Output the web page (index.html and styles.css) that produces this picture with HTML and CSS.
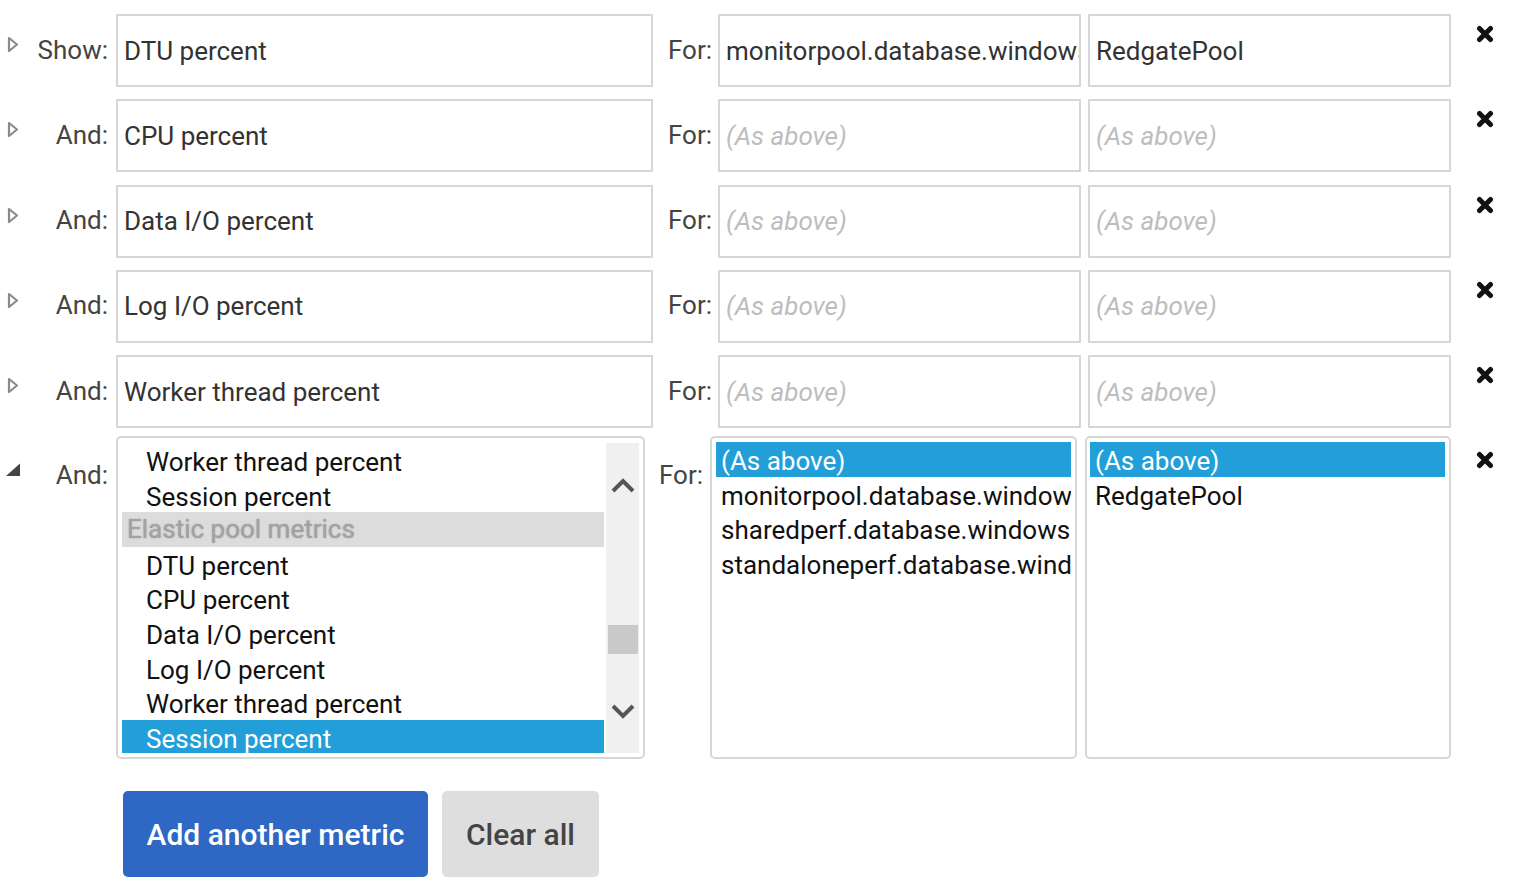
FILE: index.html
```html
<!DOCTYPE html>
<html lang="en">
<head>
    <meta charset="UTF-8">
    <meta name="viewport" content="width=device-width, initial-scale=1.0">
    <title>Metric picker</title>
    <link rel="stylesheet" href="styles.css">
</head>
<body>

    <main class="metrics">

        <div class="metric-row">
            <span class="toggle"><svg width="12" height="17" viewBox="0 0 12 17"><polygon points="2,2 10,8.5 2,15" fill="none" stroke="#8a8a8a" stroke-width="2.2" stroke-linejoin="round"/></svg></span>
            <label class="row-label">Show:</label>
            <input class="metric-input" type="text" value="DTU percent">
            <span class="for-label">For:</span>
            <input class="server-input" type="text" value="monitorpool.database.windows.net">
            <input class="pool-input" type="text" value="RedgatePool">
            <button class="remove"><svg width="18" height="18" viewBox="0 0 18 18"><path d="M3.5 3.5 L14.5 14.5 M14.5 3.5 L3.5 14.5" stroke="#111" stroke-width="5" stroke-linecap="round"/></svg></button>
        </div>

        <div class="metric-row">
            <span class="toggle"><svg width="12" height="17" viewBox="0 0 12 17"><polygon points="2,2 10,8.5 2,15" fill="none" stroke="#8a8a8a" stroke-width="2.2" stroke-linejoin="round"/></svg></span>
            <label class="row-label">And:</label>
            <input class="metric-input" type="text" value="CPU percent">
            <span class="for-label">For:</span>
            <input class="server-input" type="text" placeholder="(As above)">
            <input class="pool-input" type="text" placeholder="(As above)">
            <button class="remove"><svg width="18" height="18" viewBox="0 0 18 18"><path d="M3.5 3.5 L14.5 14.5 M14.5 3.5 L3.5 14.5" stroke="#111" stroke-width="5" stroke-linecap="round"/></svg></button>
        </div>

        <div class="metric-row">
            <span class="toggle"><svg width="12" height="17" viewBox="0 0 12 17"><polygon points="2,2 10,8.5 2,15" fill="none" stroke="#8a8a8a" stroke-width="2.2" stroke-linejoin="round"/></svg></span>
            <label class="row-label">And:</label>
            <input class="metric-input" type="text" value="Data I/O percent">
            <span class="for-label">For:</span>
            <input class="server-input" type="text" placeholder="(As above)">
            <input class="pool-input" type="text" placeholder="(As above)">
            <button class="remove"><svg width="18" height="18" viewBox="0 0 18 18"><path d="M3.5 3.5 L14.5 14.5 M14.5 3.5 L3.5 14.5" stroke="#111" stroke-width="5" stroke-linecap="round"/></svg></button>
        </div>

        <div class="metric-row">
            <span class="toggle"><svg width="12" height="17" viewBox="0 0 12 17"><polygon points="2,2 10,8.5 2,15" fill="none" stroke="#8a8a8a" stroke-width="2.2" stroke-linejoin="round"/></svg></span>
            <label class="row-label">And:</label>
            <input class="metric-input" type="text" value="Log I/O percent">
            <span class="for-label">For:</span>
            <input class="server-input" type="text" placeholder="(As above)">
            <input class="pool-input" type="text" placeholder="(As above)">
            <button class="remove"><svg width="18" height="18" viewBox="0 0 18 18"><path d="M3.5 3.5 L14.5 14.5 M14.5 3.5 L3.5 14.5" stroke="#111" stroke-width="5" stroke-linecap="round"/></svg></button>
        </div>

        <div class="metric-row">
            <span class="toggle"><svg width="12" height="17" viewBox="0 0 12 17"><polygon points="2,2 10,8.5 2,15" fill="none" stroke="#8a8a8a" stroke-width="2.2" stroke-linejoin="round"/></svg></span>
            <label class="row-label">And:</label>
            <input class="metric-input" type="text" value="Worker thread percent">
            <span class="for-label">For:</span>
            <input class="server-input" type="text" placeholder="(As above)">
            <input class="pool-input" type="text" placeholder="(As above)">
            <button class="remove"><svg width="18" height="18" viewBox="0 0 18 18"><path d="M3.5 3.5 L14.5 14.5 M14.5 3.5 L3.5 14.5" stroke="#111" stroke-width="5" stroke-linecap="round"/></svg></button>
        </div>

        <!-- row being edited: the pickers are open -->
        <div class="metric-row open">
            <span class="toggle"><svg width="16" height="14" viewBox="0 0 16 14"><polygon points="15,0.5 15,13 1,13" fill="#444"/></svg></span>
            <label class="row-label">And:</label>
            <div class="listbox metric-list">
                <div class="options">
                    <div class="option">Worker thread percent</div>
                    <div class="option">Session percent</div>
                    <div class="group">Elastic pool metrics</div>
                    <div class="option">DTU percent</div>
                    <div class="option">CPU percent</div>
                    <div class="option">Data I/O percent</div>
                    <div class="option">Log I/O percent</div>
                    <div class="option">Worker thread percent</div>
                    <div class="option selected">Session percent</div>
                </div>
                <div class="scrollbar">
                    <svg class="sb-up" width="26" height="18" viewBox="0 0 26 18"><path d="M3 15 L13 5 L23 15" fill="none" stroke="#555" stroke-width="4"/></svg>
                    <div class="sb-thumb"></div>
                    <svg class="sb-down" width="26" height="18" viewBox="0 0 26 18"><path d="M3 3 L13 13 L23 3" fill="none" stroke="#555" stroke-width="4"/></svg>
                </div>
            </div>
            <span class="for-label">For:</span>
            <div class="listbox server-list">
                <div class="options">
                    <div class="option selected">(As above)</div>
                    <div class="option">monitorpool.database.windows.net</div>
                    <div class="option">sharedperf.database.windows.net</div>
                    <div class="option">standaloneperf.database.windows.net</div>
                </div>
            </div>
            <div class="listbox pool-list">
                <div class="options">
                    <div class="option selected">(As above)</div>
                    <div class="option">RedgatePool</div>
                </div>
            </div>
            <button class="remove"><svg width="18" height="18" viewBox="0 0 18 18"><path d="M3.5 3.5 L14.5 14.5 M14.5 3.5 L3.5 14.5" stroke="#111" stroke-width="5" stroke-linecap="round"/></svg></button>
        </div>

        <div class="actions">
            <button class="btn btn-primary">Add another metric</button>
            <button class="btn">Clear all</button>
        </div>

    </main>

</body>
</html>
```

FILE: styles.css
```css
* {
    box-sizing: border-box;
}

body {
    margin: 0;
    background: #fff;
    font-family: Roboto, "Noto Sans", sans-serif;
    font-size: 26px;
    color: #333;
}

.metrics {
    padding-top: 14px;
}

.metric-row {
    display: flex;
    align-items: flex-start;
    margin-bottom: 12.25px;
}

.metric-row.open {
    margin-top: -4.25px;
    margin-bottom: 32px;
}

.toggle {
    width: 30px;
    height: 73px;
    padding: 22px 0 0 7px;
    flex-shrink: 0;
}

.open .toggle {
    padding: 27px 0 0 5px;
}

.toggle svg {
    display: block;
}

.row-label,
.for-label {
    display: flex;
    align-items: center;
    justify-content: flex-end;
    height: 71px;
    color: #444;
    flex-shrink: 0;
}

.row-label {
    width: 78px;
    margin-right: 8px;
}

.for-label {
    width: 65px;
    padding-right: 6px;
}

.open .row-label,
.open .for-label {
    height: 78px;
}

.open .for-label {
    padding-right: 7px;
}

input {
    height: 73px;
    margin: 0;
    padding: 0 0 0 6px;
    border: 2px solid #d6d6d6;
    border-radius: 1px;
    font-family: inherit;
    font-size: 26px;
    color: #333;
    background: #fff;
    flex-shrink: 0;
}

input::placeholder {
    color: #bdbdbd;
    font-style: italic;
}

.metric-input {
    width: 537px;
}

.server-input {
    width: 363px;
    margin-right: 7px;
}

.pool-input {
    width: 363px;
}

.remove {
    margin: 0 0 0 25px;
    padding: 11px 0 0 0;
    border: none;
    background: none;
    cursor: pointer;
}

.open .remove {
    padding-top: 15px;
}

.remove svg {
    display: block;
}

.listbox {
    display: flex;
    height: 323px;
    border: 2px solid #d6d6d6;
    border-radius: 5px;
    background: #fff;
    overflow: hidden;
    flex-shrink: 0;
}

.metric-list {
    width: 529px;
    padding: 5px 4px 4px 4px;
}

.server-list {
    width: 367px;
    margin-right: 8px;
    padding: 4px 4px 4px 4px;
}

.pool-list {
    width: 366px;
    padding: 4px 4px 4px 3px;
}

.options {
    flex: 1;
    min-width: 0;
    overflow: hidden;
}

.option,
.group {
    height: 34.6px;
    padding-top: 4px;
    line-height: 30.6px;
    white-space: nowrap;
    overflow: hidden;
    color: #111;
    padding-left: 5px;
}

.metric-list .option {
    padding-left: 24px;
}

.group {
    padding-top: 2px;
    background: #dcdcdc;
    color: #a2a2a2;
    text-shadow: 0 0 1.5px #999;
}

.option.selected {
    background: #229fd9;
    color: #fff;
}

.scrollbar {
    width: 33px;
    margin-left: 2px;
    background: #f0f0f0;
    display: flex;
    flex-direction: column;
    align-items: center;
}

.sb-up {
    margin-top: 33px;
}

.sb-thumb {
    width: 30px;
    height: 29px;
    margin-top: 131px;
    background: #c9c9c9;
}

.sb-down {
    margin-top: 49px;
}

.actions {
    display: flex;
    gap: 14px;
    padding-left: 123px;
}

.btn {
    height: 86px;
    padding: 0 24px;
    border: none;
    border-radius: 5px;
    background: #dedede;
    color: #444;
    font-family: inherit;
    font-size: 30px;
    font-weight: 500;
    white-space: nowrap;
    cursor: pointer;
}

.btn-primary {
    width: 305px;
    padding: 0;
    background: #2f68c4;
    color: #fff;
}
```
